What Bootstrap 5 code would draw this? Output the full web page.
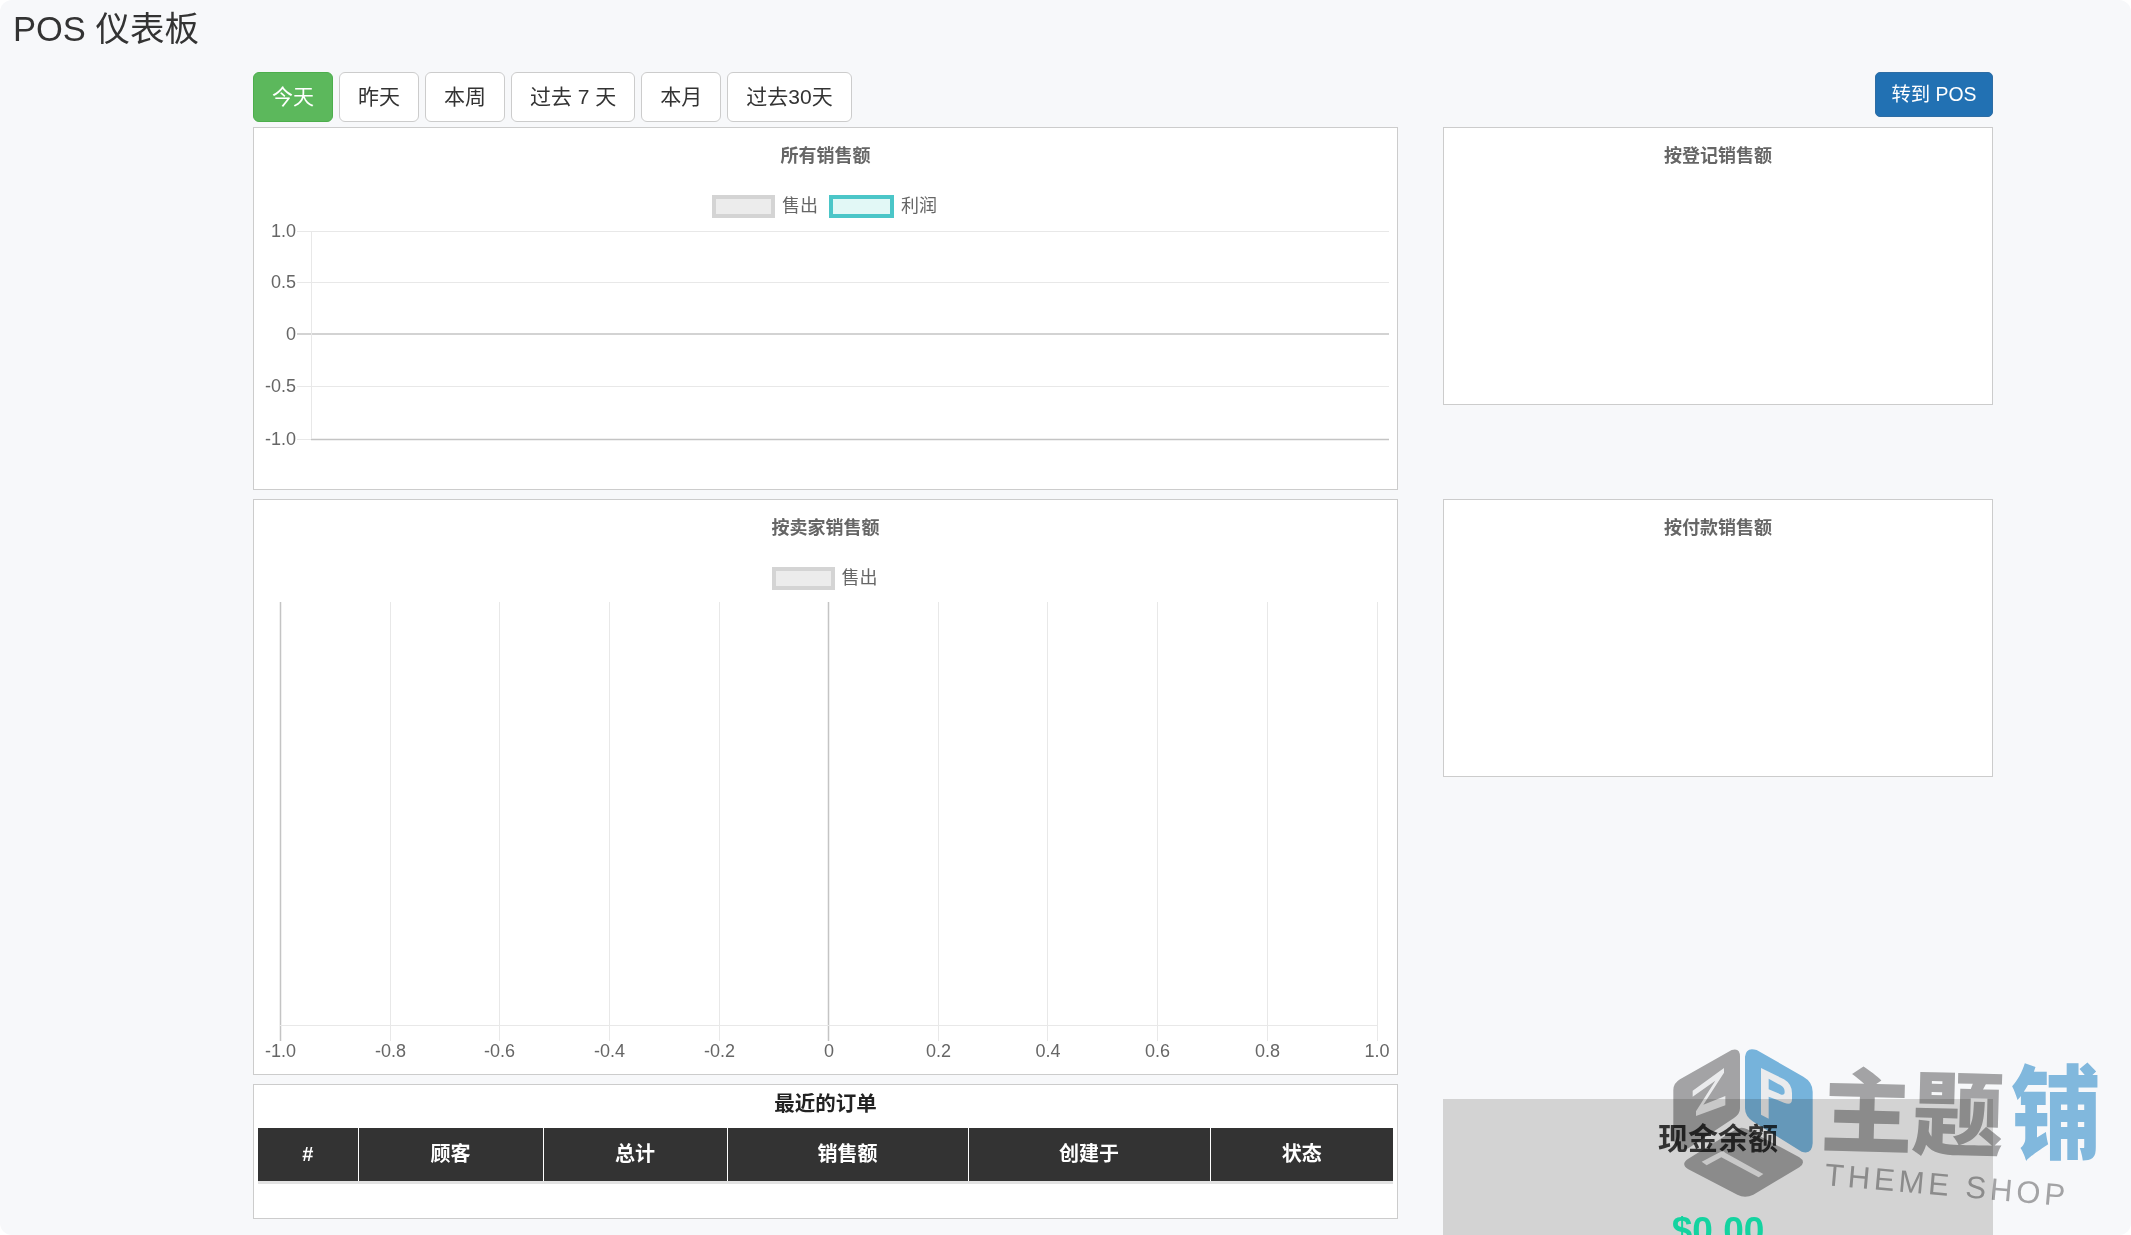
<!DOCTYPE html>
<html lang="zh">
<head>
  <meta charset="UTF-8">
  <meta name="viewport" content="width=device-width, initial-scale=1.0">
  <title>POS 仪表板</title>
  <link href="https://cdn.jsdelivr.net/npm/bootstrap@5.3.0/dist/css/bootstrap.min.css" rel="stylesheet">
  <style>
    html { background: #fff; height: 100%; overflow: hidden; }
    body {
      height: 1235px;
      overflow: hidden;
      position: relative;
      background: #f7f8fa;
      border-radius: 12px;
      color: #333;
      font-family: "Liberation Sans", "Noto Sans CJK SC", sans-serif;
    }
    .page-title { height: 72px; padding: 9px 0 0 13px; font-size: 34.5px; line-height: 41px; color: #333; font-weight: 400; margin: 0; }
    .page-wrap { margin-left: 253px; width: 1740px; height: 1163px; }
    .left-col { width: 1145px; }
    .right-col { width: 550px; }

    .range-bar { height: 50px; margin-bottom: 5px; gap: 6px; }
    .range-btn {
      --bs-btn-padding-x: 18px;
      --bs-btn-padding-y: 0;
      --bs-btn-font-size: 21px;
      --bs-btn-color: #333;
      --bs-btn-bg: #fff;
      --bs-btn-border-color: #ccc;
      --bs-btn-border-radius: 6px;
      line-height: 48px;
      white-space: nowrap;
    }
    .range-on { --bs-btn-color: #fff; --bs-btn-bg: #5cb85c; --bs-btn-border-color: #4cae4c; }
    .pos-btn {
      --bs-btn-padding-x: 15px;
      --bs-btn-padding-y: 0;
      --bs-btn-font-size: 19.4px;
      --bs-btn-color: #fff;
      --bs-btn-bg: #2271b3;
      --bs-btn-border-color: #2e6da4;
      --bs-btn-border-radius: 5px;
      width: 118px;
      height: 45px;
      line-height: 43px;
      white-space: nowrap;
      margin-bottom: 10px;
    }

    .panel { background: #fff; border: 1px solid #ccc; border-radius: 0; }
    .panel-a { height: 363px; margin-bottom: 9px; }
    .panel-b { height: 576px; margin-bottom: 9px; }
    .panel-c { height: 135px; padding: 7px 4px 0; }
    .panel-d { height: 278px; margin-bottom: 94px; }
    .panel-e { height: 278px; margin-bottom: 322px; }
    .chart-title { padding-top: 17px; font-size: 18px; line-height: 22px; font-weight: 700; color: #666; text-align: center; }
    .chart-legend { margin-top: 28px; height: 23px; gap: 7px; font-size: 18px; line-height: 23px; color: #666; }
    .swatch { width: 63px; height: 23px; border: 4px solid #d4d4d4; background: #ececec; margin-left: -2px; }
    .swatch-teal { width: 65px; border-color: #4bc6c8; background: #e2f8f6; margin-left: 4px; }
    .chart-svg { display: block; margin-top: 4px; width: 100%; }
    .chart-svg text { font-family: "Liberation Sans", sans-serif; font-size: 18px; fill: #666; }
    .grid-line { stroke: #e8e8e8; stroke-width: 1; }
    .axis-line { stroke: #c4c4c4; stroke-width: 1.5; }

    .orders-title { font-size: 20.5px; line-height: 24px; font-weight: 700; color: #222; text-align: center; margin-bottom: 12px; }
    .orders-table { table-layout: fixed; border-bottom: 3px solid #e2e2e2; margin: 0; }
    .orders-table.table > thead > tr > th {
      background: #333;
      color: #fff;
      height: 54px;
      padding: 0 0 1px;
      font-size: 20px;
      text-align: center;
      vertical-align: middle;
      border: 0;
      border-left: 1.5px solid #fff;
    }
    .orders-table.table > thead > tr > th:first-child { border-left: 0; width: 100px; }
    .orders-table.table > thead > tr > th:nth-child(2) { width: 185px; }
    .orders-table.table > thead > tr > th:nth-child(3) { width: 184px; }
    .orders-table.table > thead > tr > th:nth-child(4) { width: 241px; }
    .orders-table.table > thead > tr > th:nth-child(5) { width: 242px; }

    .cash-box { background: #d3d3d3; height: 137px; overflow: hidden; padding-top: 21px; text-align: center; }
    .cash-label { font-size: 30px; line-height: 38px; font-weight: 700; color: #333; margin-bottom: 52px; }
    .cash-value { font-size: 37px; line-height: 42px; font-weight: 700; color: #14d3a0; }

    /* watermark sits over the page, multiply keeps the text under it readable */
    .watermark { position: absolute; left: 1660px; top: 1040px; width: 445px; height: 170px; pointer-events: none; mix-blend-mode: multiply; }
    .watermark svg { position: absolute; left: 0; top: 0; }
    .wm-text { position: absolute; font-weight: 900; line-height: 1; white-space: nowrap; font-family: "Noto Sans CJK SC", sans-serif; }
    .wm-gray { left: 161px; top: 21px; font-size: 92px; color: #a8a8a8; letter-spacing: -1px; transform: rotate(1.5deg); }
    .wm-blue { left: 351px; top: 15px; font-size: 90px; color: #85bde2; transform: scaleY(1.14); transform-origin: center top; }
    .wm-en { left: 165px; top: 119px; font-size: 31px; font-weight: 400; letter-spacing: 4px; color: #a8a8a8; font-family: "Liberation Sans", sans-serif; transform: rotate(5deg); transform-origin: left center; }
  </style>
</head>
<body>
  <h1 class="page-title">POS 仪表板</h1>

  <div class="page-wrap d-flex justify-content-between align-items-start">
    <div class="left-col">
      <div class="range-bar d-flex">
        <button type="button" class="btn range-btn range-on">今天</button>
        <button type="button" class="btn range-btn">昨天</button>
        <button type="button" class="btn range-btn">本周</button>
        <button type="button" class="btn range-btn">过去 7 天</button>
        <button type="button" class="btn range-btn">本月</button>
        <button type="button" class="btn range-btn">过去30天</button>
      </div>

      <div class="panel panel-a">
        <div class="chart-title">所有销售额</div>
        <div class="chart-legend d-flex justify-content-center">
          <span class="swatch"></span><span>售出</span>
          <span class="swatch swatch-teal"></span><span>利润</span>
        </div>
        <svg class="chart-svg" viewBox="0 0 1143 266" height="266">
          <line class="grid-line" x1="43" y1="9.5" x2="1135" y2="9.5"/>
          <line class="grid-line" x1="43" y1="60.5" x2="1135" y2="60.5"/>
          <line class="axis-line" x1="43" y1="112" x2="1135" y2="112"/>
          <line class="grid-line" x1="43" y1="164.5" x2="1135" y2="164.5"/>
          <line class="grid-line" x1="43" y1="217.5" x2="58" y2="217.5"/>
          <line class="axis-line" x1="57" y1="217.5" x2="1135" y2="217.5"/>
          <line class="grid-line" x1="57.5" y1="9" x2="57.5" y2="217"/>
          <text x="42" y="15" text-anchor="end">1.0</text>
          <text x="42" y="66" text-anchor="end">0.5</text>
          <text x="42" y="118" text-anchor="end">0</text>
          <text x="42" y="170" text-anchor="end">-0.5</text>
          <text x="42" y="223" text-anchor="end">-1.0</text>
        </svg>
      </div>

      <div class="panel panel-b">
        <div class="chart-title">按卖家销售额</div>
        <div class="chart-legend d-flex justify-content-center">
          <span class="swatch"></span><span>售出</span>
        </div>
        <svg class="chart-svg" viewBox="0 0 1143 479" height="479">
          <line class="axis-line" x1="26.5" y1="8" x2="26.5" y2="447"/>
          <line class="grid-line" x1="136.5" y1="8" x2="136.5" y2="447"/>
          <line class="grid-line" x1="245.5" y1="8" x2="245.5" y2="447"/>
          <line class="grid-line" x1="355.5" y1="8" x2="355.5" y2="447"/>
          <line class="grid-line" x1="465.5" y1="8" x2="465.5" y2="447"/>
          <line class="axis-line" x1="574.5" y1="8" x2="574.5" y2="447"/>
          <line class="grid-line" x1="684.5" y1="8" x2="684.5" y2="447"/>
          <line class="grid-line" x1="793.5" y1="8" x2="793.5" y2="447"/>
          <line class="grid-line" x1="903.5" y1="8" x2="903.5" y2="447"/>
          <line class="grid-line" x1="1013.5" y1="8" x2="1013.5" y2="447"/>
          <line class="grid-line" x1="1123.5" y1="8" x2="1123.5" y2="447"/>
          <line class="grid-line" x1="26" y1="431.5" x2="1124" y2="431.5"/>
          <text x="26.5" y="463" text-anchor="middle">-1.0</text>
          <text x="136.5" y="463" text-anchor="middle">-0.8</text>
          <text x="245.5" y="463" text-anchor="middle">-0.6</text>
          <text x="355.5" y="463" text-anchor="middle">-0.4</text>
          <text x="465.5" y="463" text-anchor="middle">-0.2</text>
          <text x="575" y="463" text-anchor="middle">0</text>
          <text x="684.5" y="463" text-anchor="middle">0.2</text>
          <text x="794" y="463" text-anchor="middle">0.4</text>
          <text x="903.5" y="463" text-anchor="middle">0.6</text>
          <text x="1013.5" y="463" text-anchor="middle">0.8</text>
          <text x="1123" y="463" text-anchor="middle">1.0</text>
        </svg>
      </div>

      <div class="panel panel-c">
        <div class="orders-title">最近的订单</div>
        <table class="table orders-table">
          <thead>
            <tr>
              <th>#</th>
              <th>顾客</th>
              <th>总计</th>
              <th>销售额</th>
              <th>创建于</th>
              <th>状态</th>
            </tr>
          </thead>
        </table>
      </div>
    </div>

    <div class="right-col d-flex flex-column">
      <div class="d-flex justify-content-end">
        <a href="#" class="btn pos-btn">转到 POS</a>
      </div>
      <div class="panel panel-d">
        <div class="chart-title">按登记销售额</div>
      </div>
      <div class="panel panel-e">
        <div class="chart-title">按付款销售额</div>
      </div>
      <div class="cash-box">
        <div class="cash-label">现金余额</div>
        <div class="cash-value">$0.00</div>
      </div>
    </div>
  </div>

  <div class="watermark">
    <svg width="200" height="170" viewBox="0 0 600 510">
      <!-- left face -->
      <path d="M215 30 Q240 22 240 50 V205 Q240 222 222 234 L85 325 Q62 338 50 318 Q40 305 40 285 V150 Q40 130 60 118 Z" fill="#a8a8a8"/>
      <path d="M98 152 L192 84 L192 98 L130 194 L196 168 L196 196 L108 228 L108 214 L166 122 L98 170 Z" fill="#f2f2f2"/>
      <!-- right face -->
      <path d="M255 50 Q258 20 290 30 L430 110 Q458 126 458 155 V310 Q456 345 425 335 L280 245 Q255 230 255 205 Z" fill="#7ab8e0"/>
      <path fill-rule="evenodd" d="M303 84 L372 118 Q396 132 396 160 V178 Q396 198 372 188 L326 170 V236 L303 224 Z M326 116 V148 L364 164 Q374 166 374 156 Q374 142 362 136 Z" fill="#f2f2f2"/>
      <!-- bottom face -->
      <path d="M228 268 Q245 258 262 268 L418 352 Q440 366 418 382 L280 464 Q255 476 232 464 L85 388 Q60 372 85 356 Z" fill="#a8a8a8"/>
      <path d="M125 365 L188 332 L198 340 L310 402 L296 412 L184 352 L140 376 Z" fill="#f2f2f2"/>
    </svg>
    <span class="wm-text wm-gray">主题</span>
    <span class="wm-text wm-blue">铺</span>
    <span class="wm-text wm-en">THEME SHOP</span>
  </div>

  <script src="https://cdn.jsdelivr.net/npm/bootstrap@5.3.0/dist/js/bootstrap.bundle.min.js"></script>
</body>
</html>
